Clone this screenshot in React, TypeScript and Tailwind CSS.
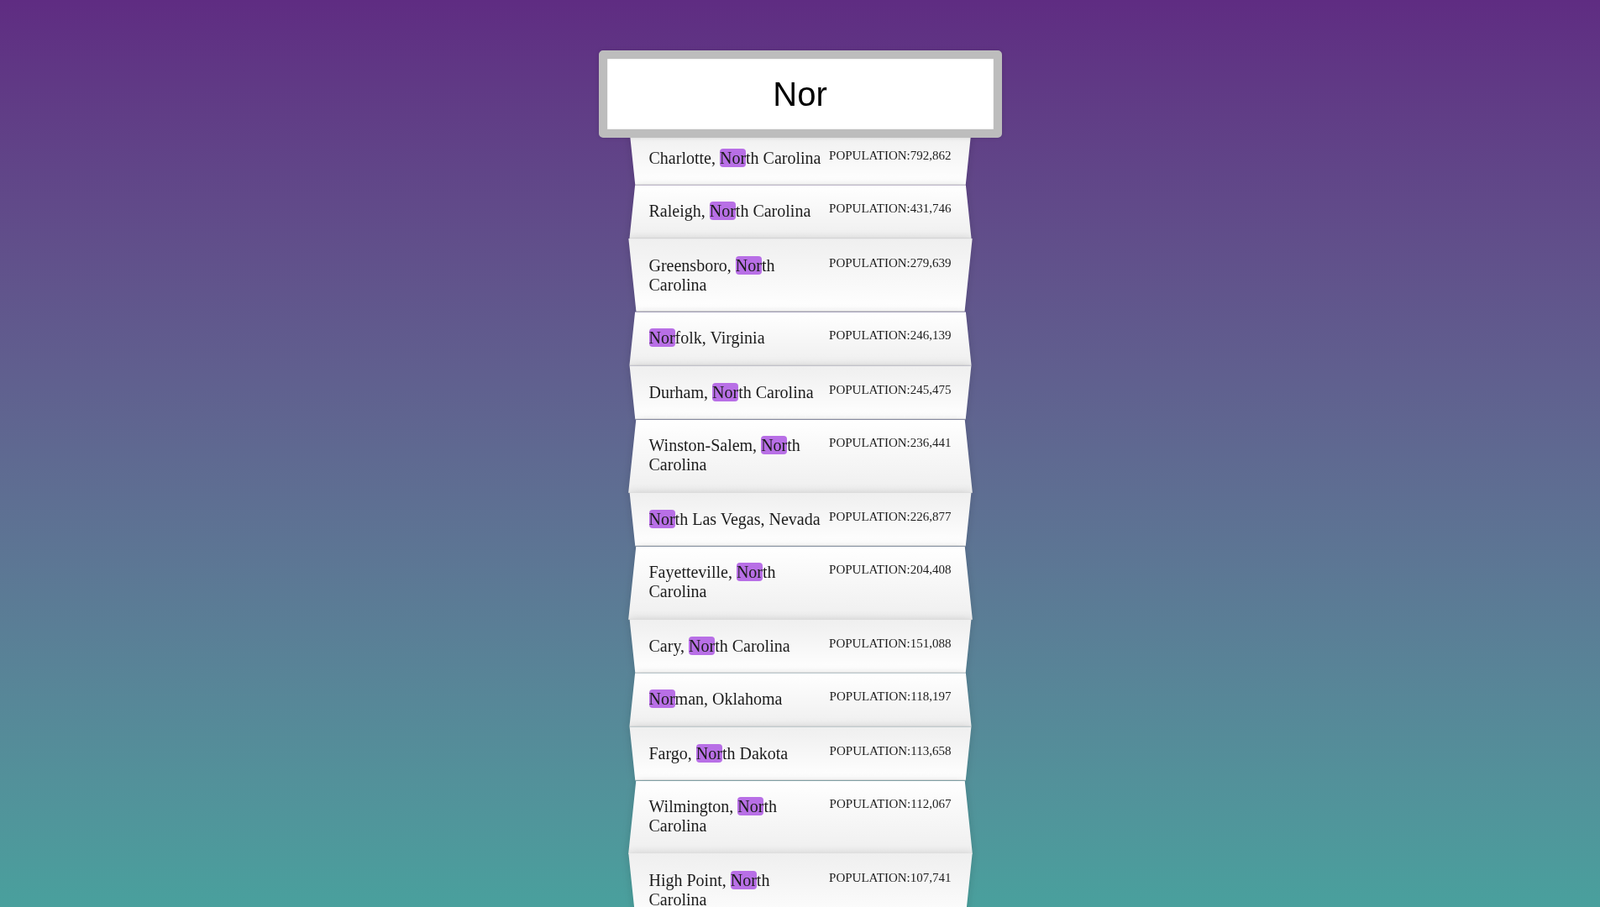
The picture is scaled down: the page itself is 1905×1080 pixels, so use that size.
import { useState } from 'react';

interface City {
    city: string;
    state: string;
    population: string;
}

const cities: City[] = [
    { city: 'Charlotte', state: 'North Carolina', population: '792,862' },
    { city: 'Raleigh', state: 'North Carolina', population: '431,746' },
    { city: 'Greensboro', state: 'North Carolina', population: '279,639' },
    { city: 'Norfolk', state: 'Virginia', population: '246,139' },
    { city: 'Durham', state: 'North Carolina', population: '245,475' },
    { city: 'Winston-Salem', state: 'North Carolina', population: '236,441' },
    { city: 'North Las Vegas', state: 'Nevada', population: '226,877' },
    { city: 'Fayetteville', state: 'North Carolina', population: '204,408' },
    { city: 'Cary', state: 'North Carolina', population: '151,088' },
    { city: 'Norman', state: 'Oklahoma', population: '118,197' },
    { city: 'Fargo', state: 'North Dakota', population: '113,658' },
    { city: 'Wilmington', state: 'North Carolina', population: '112,067' },
    { city: 'High Point', state: 'North Carolina', population: '107,741' },
    { city: 'Norwalk', state: 'California', population: '106,589' },
    { city: 'North Charleston', state: 'South Carolina', population: '104,054' },
];

// wraps every match of the query in a highlight span
function Highlight({ text, query }: { text: string; query: string }) {
    if (!query) return <>{text}</>;
    const parts = text.split(new RegExp(`(${query})`, 'gi'));
    return (
        <>
            {parts.map((part, i) =>
                part.toLowerCase() === query.toLowerCase() ? (
                    <span key={i} className="bg-[#b86fe6] rounded-[4px]">
                        {part}
                    </span>
                ) : (
                    <span key={i}>{part}</span>
                )
            )}
        </>
    );
}

export default function App() {
    const [query, setQuery] = useState('Nor');

    const matches = cities.filter((c) => {
        const regex = new RegExp(query, 'gi');
        return c.city.match(regex) || c.state.match(regex);
    });

    return (
        <div className="h-screen overflow-hidden bg-gradient-to-b from-[#5f2c82] to-[#49a09d] font-['Liberation_Serif','Times_New_Roman',serif] text-[20px] text-[#1c1c1c]">
            <form className="max-w-[400px] mx-auto pt-[50px]" onSubmit={(e) => e.preventDefault()}>
                <input
                    type="text"
                    value={query}
                    autoFocus
                    onChange={(e) => setQuery(e.target.value)}
                    className="relative z-10 -ml-[10%] w-[120%] translate-y-[10px] m-0 p-5 text-center outline-none border-[10px] border-[#bdbdbd] rounded-[5px] bg-white text-[40px] leading-[44px] text-black caret-black font-['Liberation_Sans',Arial,sans-serif] shadow-[0_0_5px_rgba(0,0,0,0.12),inset_0_0_2px_rgba(0,0,0,0.19)]"
                />
                <ul className="relative m-0 p-0">
                    {matches.map((c, i) => {
                        const odd = i % 2 === 0;
                        return (
                            <li
                                key={c.city + c.state}
                                className={
                                    odd
                                        ? 'relative isolate flex justify-between m-0 pt-5 px-5 pb-[21px] translate-y-[3px]'
                                        : 'relative isolate flex justify-between m-0 pt-5 px-5 pb-[21px] translate-y-[2px]'
                                }
                            >
                                {/* folded paper card behind the text */}
                                <div
                                    aria-hidden
                                    className={
                                        odd
                                            ? 'absolute inset-0 -z-10 border-b border-[#d8d8d8] shadow-[0_0_10px_rgba(0,0,0,0.14)] bg-[linear-gradient(to_top,#ffffff_0%,#efefef_100%)] [transform:perspective(100px)_rotateX(-3deg)]'
                                            : 'absolute inset-0 -z-10 border-b border-[#d8d8d8] shadow-[0_0_10px_rgba(0,0,0,0.14)] bg-[linear-gradient(to_bottom,#ffffff_0%,#efefef_100%)] [transform:perspective(100px)_rotateX(3deg)_scale(1.001)]'
                                    }
                                />
                                <span className="leading-[23px]">
                                    <Highlight text={`${c.city}, ${c.state}`} query={query} />
                                </span>
                                <span className="text-[15px] leading-[17px] whitespace-nowrap">
                                    POPULATION:{c.population}
                                </span>
                            </li>
                        );
                    })}
                </ul>
            </form>
        </div>
    );
}
